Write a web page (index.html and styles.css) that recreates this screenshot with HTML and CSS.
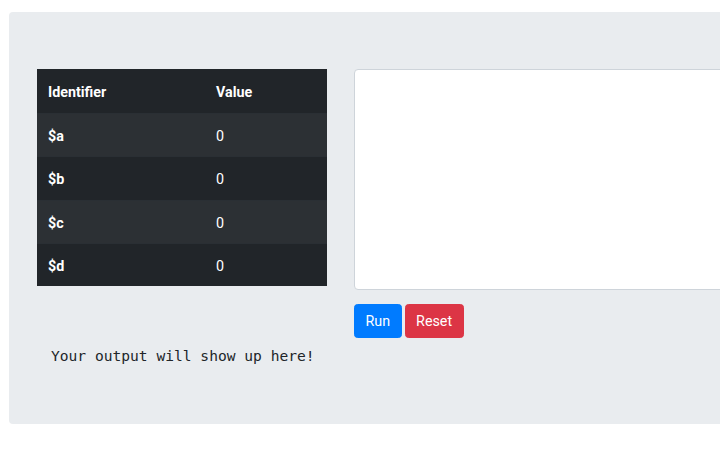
FILE: index.html
```html
<!DOCTYPE html>
<html lang="en">
<head>
<meta charset="utf-8">
<title>Interpreter</title>
<link rel="stylesheet" href="styles.css">
</head>
<body>
<div class="page">
  <div class="jumbotron">
    <div class="row">
      <div class="col-left">
        <table class="vars">
          <thead>
            <tr><th class="c-id">Identifier</th><th>Value</th></tr>
          </thead>
          <tbody>
            <tr class="odd"><th class="c-id">$a</th><td>0</td></tr>
            <tr><th class="c-id">$b</th><td>0</td></tr>
            <tr class="odd"><th class="c-id">$c</th><td>0</td></tr>
            <tr><th class="c-id">$d</th><td>0</td></tr>
          </tbody>
        </table>
        <pre class="output">Your output will show up here!</pre>
      </div>
      <div class="col-right">
        <textarea class="code"></textarea>
        <div class="actions">
          <button class="btn btn-run">Run</button>
          <button class="btn btn-reset">Reset</button>
        </div>
      </div>
    </div>
  </div>
</div>
</body>
</html>
```
FILE: styles.css
```css
html, body {
  margin: 0;
  padding: 0;
  overflow: hidden;
  background: #fff;
}
body {
  font-family: Roboto, "Liberation Sans", sans-serif;
  font-size: 14.3px;
  line-height: 21px;
  color: #212529;
}
.page {
  padding: 12px 0 0 9px;
  width: 1000px;
}
.jumbotron {
  background: #e9ecef;
  border-radius: 4px;
  padding: 57px 28px 57px 28px;
  height: 298px;
}
.row {
  display: flex;
  gap: 27px;
}
.col-left {
  width: 290px;
  flex: none;
}
.col-right {
  flex: 1;
  display: flex;
  flex-direction: column;
}
.vars {
  width: 290px;
  border-collapse: collapse;
  background: #212529;
  color: #fff;
}
.vars th, .vars td {
  text-align: left;
  padding: 11px 11px 9px 11px;
  line-height: 22.25px;
  font-weight: 400;
  vertical-align: top;
}
.vars thead th {
  font-weight: 700;
  padding: 12px 11px 10px 11px;
  line-height: 22px;
}
.vars .c-id {
  width: 146px;
  font-weight: 700;
}
.vars tbody tr {
  border-top: 1px solid #2a2f34;
}
.vars tbody tr.odd {
  background: #2c3034;
}
.output {
  margin: 61px 0 0 0;
  padding-left: 14px;
  font-family: "DejaVu Sans Mono", monospace;
  font-size: 14.6px;
  line-height: 18px;
  color: #212529;
}
.code {
  display: block;
  box-sizing: border-box;
  width: 100%;
  height: 221px;
  margin: 0;
  border: 1px solid #ced4da;
  border-radius: 4px;
  background: #fff;
  resize: none;
}
.actions {
  display: flex;
  gap: 3px;
  margin-top: 14px;
}
.btn {
  font-family: Roboto, "Liberation Sans", sans-serif;
  font-size: 14.3px;
  line-height: 21px;
  padding: 5.5px 10.5px;
  border: 1px solid transparent;
  border-radius: 3.5px;
  color: #fff;
  cursor: pointer;
}
.btn-run {
  background: #007bff;
  border-color: #007bff;
}
.btn-reset {
  background: #dc3545;
  border-color: #dc3545;
}
```
